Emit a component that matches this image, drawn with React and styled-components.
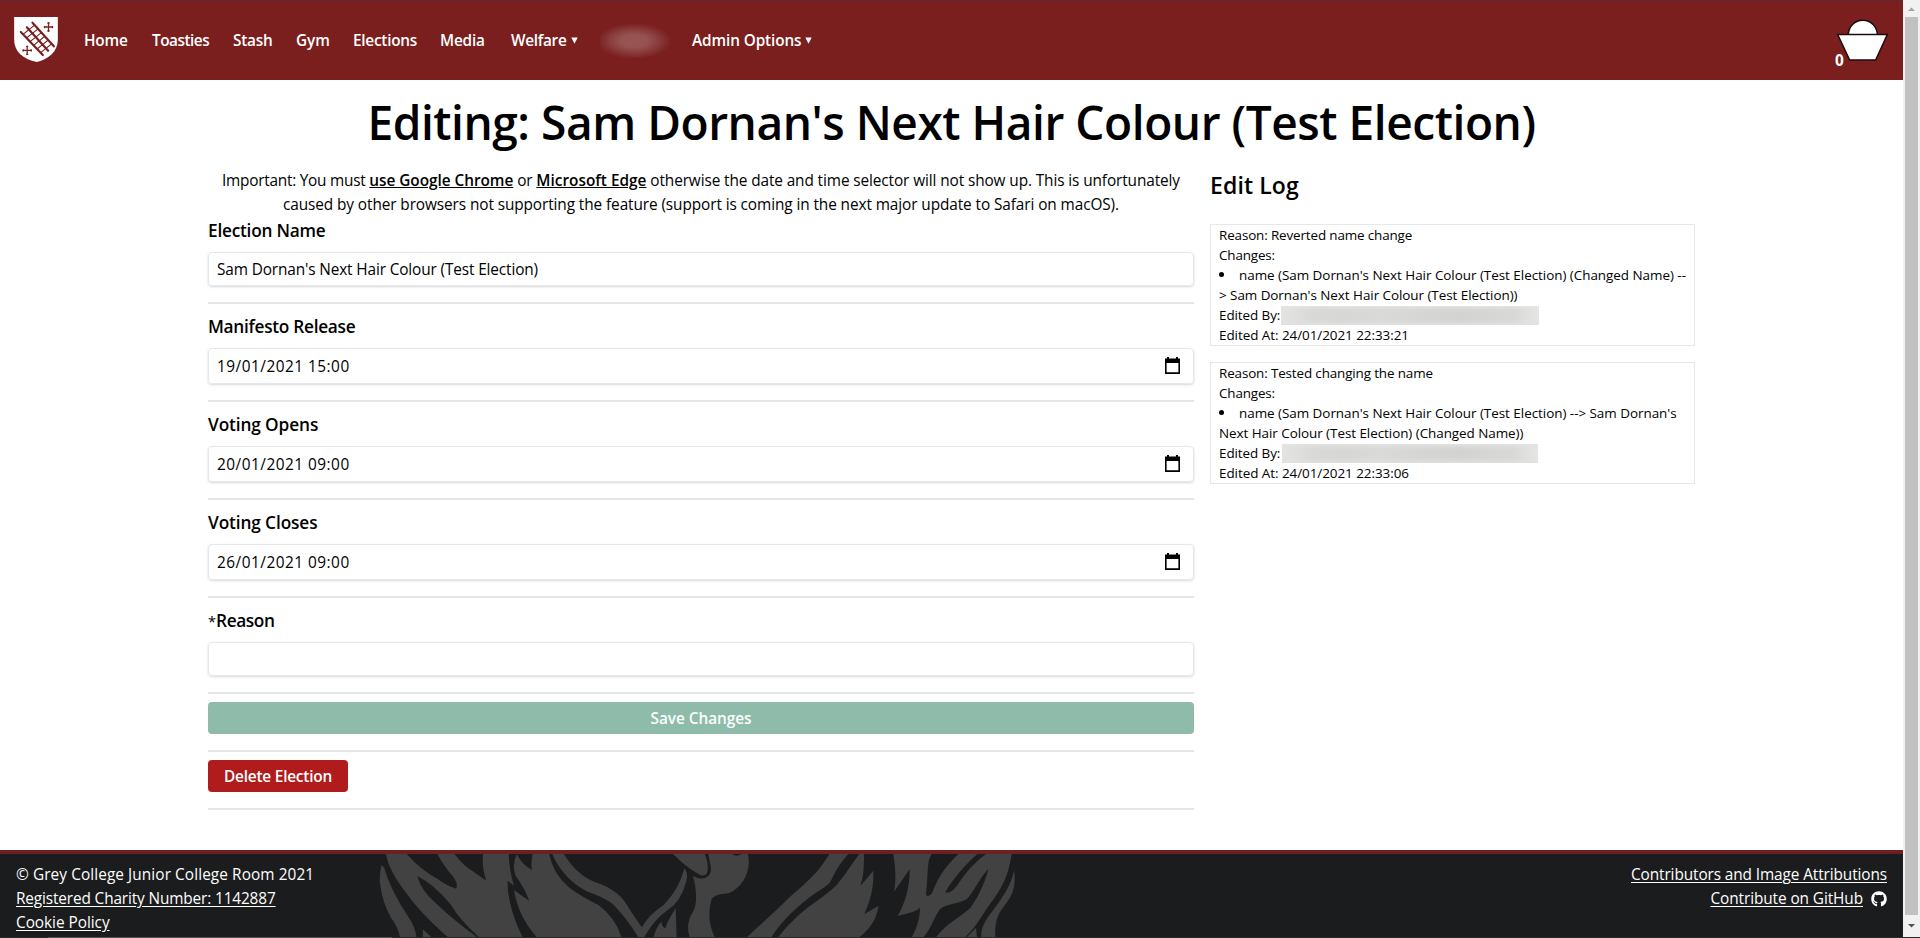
import React from "react";
import styled, { createGlobalStyle } from "styled-components";
import { FaGithub } from "react-icons/fa";

const GlobalStyle = createGlobalStyle`
  *, *::before, *::after { box-sizing: border-box; }
  html, body { margin: 0; height: 938px; overflow: hidden; }
  body {
    background: #fff;
    color: #000;
    font-family: "Open Sans", "Noto Sans", sans-serif;
    font-size: 15.36px;
    line-height: 24px;
  }
  h1, h2, h3, p, ul { margin: 0; padding: 0; font-weight: inherit; }
  a { color: inherit; }
`;

const Window = styled.div`
  display: grid;
  grid-template-columns: 1fr 17px;
  grid-template-rows: 937px 1px;
  height: 938px;
`;

const Page = styled.div`
  display: flex;
  flex-direction: column;
  min-width: 0;
  height: 937px;
`;

const T = styled.span`
  letter-spacing: ${(p) => p.$track || 0}px;
  white-space: pre;
`;

/* Navigation */
const NavBar = styled.nav`
  display: flex;
  align-items: center;
  height: 80px;
  padding: 0 15px 0 14px;
  background: #7a1e1e;
  border-top: 1px solid #5b2a31;
  color: #fff;
  font-weight: 600;
`;

const CrestLink = styled.a`
  display: flex;
  width: 70px;
  padding-bottom: 2px;
`;

const NavItem = styled.div`
  display: flex;
  align-items: center;
  width: ${(p) => p.$width}px;
  gap: 4px;
`;

const Caret = styled.svg`
  width: 7px;
  height: 7px;
`;

const BlurredName = styled.div`
  width: 72px;
  height: 34px;
  margin-left: -1px;
  background: radial-gradient(ellipse 38px 18px at 34px 17px, #985453 0%, #965251 35%, rgba(145, 75, 75, 0.75) 60%, rgba(122, 30, 30, 0) 100%);
`;

const Basket = styled.div`
  position: relative;
  width: 54px;
  height: 50px;
  margin-left: auto;
`;

const BasketCount = styled.span`
  position: absolute;
  left: 1px;
  bottom: -5px;
  line-height: 20px;
  font-weight: 700;
`;

const BasketDrawing = styled.svg`
  display: block;
  width: 52px;
  height: 43px;
  margin: 2px 0 0 2px;
`;

/* Main content */
const Title = styled.h1`
  height: 88px;
  text-align: center;
  font-size: 46.08px;
  line-height: 86px;
  font-weight: 600;
`;

const Columns = styled.main`
  display: flex;
  gap: 16px;
  width: 1487px;
  margin: 0 auto;
  flex: 1;
`;

const FormColumn = styled.div`
  width: 986px;
`;

const Notice = styled.div`
  height: 48px;
  padding-top: 1px;
  text-align: center;
  a { font-weight: 600; }
`;

const Section = styled.section`
  padding: ${(p) => (p.$first ? 0 : 8)}px 0 16px;
  border-bottom: 2px solid #e5e5e6;
`;

const Label = styled.h2`
  height: 28px;
  margin-bottom: 8px;
  font-size: 17.28px;
  line-height: 29px;
  font-weight: 600;
`;

const Asterisk = styled.span`
  font-weight: 400;
  font-size: 14.5px;
`;

const Field = styled.div`
  display: flex;
  align-items: center;
  justify-content: space-between;
  height: ${(p) => (p.$tall ? 36 : 34)}px;
  padding: 1px 13px 0 8px;
  border: 1px solid #e5e7eb;
  border-radius: 4px;
  box-shadow: 0 1px 3px rgba(0, 0, 0, 0.1), 0 1px 2px rgba(0, 0, 0, 0.06);
`;

const CalendarIcon = styled.svg`
  width: 15px;
  height: 17px;
  margin-bottom: 3px;
`;

const Button = styled.button`
  display: block;
  width: ${(p) => p.$width};
  height: 32px;
  padding: 1px 0 0;
  border: 0;
  border-radius: 4px;
  background: ${(p) => p.$bg};
  color: ${(p) => p.$color || "#fff"};
  font: inherit;
  font-weight: 600;
`;

const LogColumn = styled.aside`
  width: 485px;
`;

const LogTitle = styled.h2`
  height: 56px;
  font-size: 23.04px;
  line-height: 34px;
  font-weight: 600;
`;

const LogEntry = styled.article`
  height: 122px;
  margin-bottom: 16px;
  padding: 0 0 0 8px;
  border: 1px solid #e5e7eb;
  font-size: 13.44px;
  line-height: 20px;
`;

const LogLine = styled.p`
  display: flex;
  align-items: center;
  height: 20px;
`;

const Bullet = styled.span`
  flex: none;
  width: 5px;
  height: 5px;
  margin: 0 15px 1px 0;
  border-radius: 50%;
  background: #000;
`;

const BlurredEditor = styled.span`
  width: ${(p) => p.$width}px;
  height: 19px;
  margin-left: ${(p) => p.$gap}px;
  background: linear-gradient(90deg, #e4e4e3 0%, #d9d9d8 12%, #d6d6d5 24%, #dadad9 38%, #d5d5d4 55%, #d3d3d2 70%, #d8d8d7 90%, #e6e6e5 100%);
  box-shadow: inset 0 3px 4px -1px #e4e4e3, inset 0 -3px 4px -1px #e1e1e0;
`;

/* Footer */
const FooterBar = styled.footer`
  position: relative;
  display: flex;
  justify-content: space-between;
  height: 87px;
  padding: 9px 16px 0;
  border-top: 4px solid #6b2121;
  background: #1b1c1d;
  color: #fff;
  overflow: hidden;
`;

const PhoenixBackdrop = styled.svg`
  position: absolute;
  left: 360px;
  top: 0;
  width: 680px;
  height: 83px;
`;

const FooterColumn = styled.div`
  position: relative;
  display: flex;
  flex-direction: column;
  align-items: ${(p) => p.$align || "flex-start"};
`;

const FooterLine = styled.div`
  display: flex;
  align-items: center;
  height: 24px;
  gap: 8px;
  a { text-underline-offset: 2px; }
`;

/* Scrollbar and window edge */
const ScrollTrack = styled.div`
  display: flex;
  flex-direction: column;
  align-items: center;
  background: #f1f1f1;
`;

const ScrollArrow = styled.svg`
  width: 17px;
  height: 17px;
`;

const ScrollThumb = styled.div`
  width: 13px;
  height: 898px;
  background: #c1c1c1;
`;

const WindowEdge = styled.div`
  grid-column: 1 / 3;
  background: linear-gradient(90deg, #2c2829 48px, #555 48px, #555 392px, #2c2829 392px);
`;

function Rungs({ x1, y1, x2, y2 }) {
  const n = 6;
  const rungs = [];
  for (let i = 0; i < n; i++) {
    const t = 0.1 + (i * 0.8) / (n - 1);
    const x = x1 + (x2 - x1) * t;
    const y = y1 + (y2 - y1) * t;
    rungs.push(<path key={i} d={`M${x} ${y}l16 -13`} />);
  }
  return <g>{rungs}</g>;
}

const Crest = () => (
  <svg width="44" height="45" viewBox="42 52 131 135" fill="none" stroke="#7a1e1e" strokeLinecap="round">
    <path d="M42 52H173V120C173 155 145 178 110 187C68 178 42 155 42 120Z" fill="#fff" stroke="none" />
    <g strokeWidth="6.5">
      <path d="M62 97L128 166M80 83L144 153M97 69L161 140" />
    </g>
    <g strokeWidth="3.2">
      <Rungs x1={62} y1={97} x2={128} y2={166} />
      <Rungs x1={80} y1={83} x2={144} y2={153} />
    </g>
    <path d="M133 82H157M145 70V94M69 152H93M81 140V164" strokeWidth="3.8" />
    <path d="M133 80v4M157 80v4M143 70h4M143 94h4M69 150v4M93 150v4M79 140h4M79 164h4" strokeWidth="3.8" />
  </svg>
);

const Down = () => (
  <Caret viewBox="0 0 7 7">
    <path d="M0.3 0.5H6.7L3.5 6.7Z" fill="#fff" />
  </Caret>
);

const Calendar = () => (
  <CalendarIcon viewBox="0 0 15 17">
    <path d="M2 0H4V1.5H11V0H13V1.5H15V17H0V1.5H2ZM1.6 6V15.2H13.4V6Z" fillRule="evenodd" />
  </CalendarIcon>
);

const Phoenix = () => (
  <PhoenixBackdrop viewBox="0 0 680 83" fill="#424242">
    <g transform="scale(0.43367 0.33333) translate(0 -42)">
      <path d="M50 74Q44 100 46 130Q52 190 72 235Q88 260 92 292L130 292Q128 262 112 232Q70 150 56 85Z" />
      <path d="M60 42L108 42Q140 90 180 118Q200 138 222 146Q228 125 205 95Q190 70 178 42L218 42Q240 80 262 95L291 122Q280 80 284 42L343 42Q344 90 355 137L340 122Q340 200 375 292L275 292Q230 240 210 195Q170 132 132 108Q140 150 175 190Q215 240 270 292L203 292Q140 220 110 165Q65 90 60 42Z" />
      <path d="M145 268L165 292H145Z" />
      <path d="M362 42Q370 70 396 90Q394 65 398 42L436 42Q445 100 480 140Q510 170 550 195Q590 235 603 292L408 292Q365 230 355 150Q370 165 390 182Q382 150 358 105Q350 70 362 42Z" />
      <path d="M470 42Q500 105 540 125Q600 150 620 205Q635 235 650 262Q665 225 700 195Q735 150 748 85Q758 100 752 125Q740 185 710 210Q680 235 655 292L642 292Q615 235 585 195Q570 175 525 155Q470 120 443 42Z" />
      <path d="M728 205L730 292L677 292Q682 262 695 245Q696 260 704 265Q710 240 728 205Z" />
      <path d="M722 42L795 42Q806 75 800 100Q792 112 780 102Q750 80 722 42Z" />
      <path d="M803 42L858 42Q868 52 880 42L894 42Q902 80 885 120Q870 150 850 160Q815 162 810 180Q798 240 818 292L760 292Q750 250 768 215Q782 180 768 108Q790 124 804 107Q812 95 808 75Z" />
    </g>
    <g transform="translate(380 -4) scale(0.33333)">
      <path d="M268 12C240 60 210 90 150 140C100 190 60 225 20 262L94 262C120 220 160 180 205 145C245 115 265 110 275 88C290 55 305 35 325 12Z" />
      <path d="M358 12C330 50 315 75 290 105C260 135 210 165 180 192C150 220 130 240 115 262L358 262C385 240 408 215 416 167L373 192C392 150 402 110 400 62L361 108C372 75 372 45 372 12Z" />
      <path d="M460 12L575 12C560 35 566 60 558 132C560 142 570 140 578 125C595 80 620 45 655 12L712 12C680 40 640 85 616 126C625 132 640 122 650 108C680 65 700 40 738 12L815 12C805 75 790 110 750 162C720 205 705 235 675 262L588 262C620 220 650 210 690 175C710 150 735 100 745 58C720 80 700 130 680 148C650 165 620 160 600 178C580 205 575 235 550 262L515 262C530 235 540 205 540 173C520 190 495 190 473 198C495 160 510 110 509 58L462 125C470 85 465 45 460 12Z" />
      <path d="M822 62C830 110 815 140 795 165C765 200 765 230 766 262L724 262C722 235 735 210 760 180C790 140 815 100 822 62Z" />
      <path d="M708 233L711 262H680Z" />
    </g>
  </PhoenixBackdrop>
);

const NAV = [
  { text: "Home", width: 68, track: -0.23 },
  { text: "Toasties", width: 81, track: -0.5 },
  { text: "Stash", width: 63, track: -0.25 },
  { text: "Gym", width: 57, track: -0.1 },
  { text: "Elections", width: 87, track: -0.25 },
  { text: "Media", width: 71, track: -0.2 },
  { text: "Welfare", width: 90, track: -0.3, menu: true },
  { blurred: true, width: 91 },
  { text: "Admin Options", width: 130, track: -0.12, menu: true },
];

const DATES = [
  { label: "Manifesto Release", track: -0.29, value: "19/01/2021 15:00" },
  { label: "Voting Opens", track: -0.12, value: "20/01/2021 09:00" },
  { label: "Voting Closes", track: -0.12, value: "26/01/2021 09:00" },
];

const LOG = [
  {
    reason: "Reason: Reverted name change",
    change: ["name (Sam Dornan's Next Hair Colour (Test Election) (Changed Name) --", "> Sam Dornan's Next Hair Colour (Test Election))"],
    at: "Edited At: 24/01/2021 22:33:21",
    blur: 258,
    gap: 1,
  },
  {
    reason: "Reason: Tested changing the name",
    change: ["name (Sam Dornan's Next Hair Colour (Test Election) --> Sam Dornan's", "Next Hair Colour (Test Election) (Changed Name))"],
    at: "Edited At: 24/01/2021 22:33:06",
    blur: 256,
    gap: 2,
  },
];

export default function App() {
  return (
    <>
      <GlobalStyle />
      <Window>
        <Page>
          <NavBar>
            <CrestLink>
              <Crest />
            </CrestLink>
            {NAV.map((item, i) => (
              <NavItem key={i} $width={item.width}>
                {item.blurred ? <BlurredName /> : <T $track={item.track}>{item.text}</T>}
                {item.menu && <Down />}
              </NavItem>
            ))}
            <Basket>
              <BasketDrawing viewBox="169 54 156 129" fill="#fff" stroke="#1a0c0c" strokeWidth="4.5">
                <path d="M206 104A43.500 43.500 0 0 1 293 104Z" />
                <path d="M174 103.500H323L288 180H210Z" />
              </BasketDrawing>
              <BasketCount>0</BasketCount>
            </Basket>
          </NavBar>

          <Title>
            <T $track={-0.46}>Editing: Sam Dornan's Next Hair Colour (Test Election)</T>
          </Title>

          <Columns>
            <FormColumn>
              <Notice>
                <div>
                  <T $track={-0.24}>Important: You must </T>
                  <a href="#chrome"><T $track={-0.036}>use Google Chrome</T></a>
                  <T $track={-0.1}> or </T>
                  <a href="#edge"><T>Microsoft Edge</T></a>
                  <T $track={-0.1}> otherwise the date and time selector will not show up. This is unfortunately</T>
                </div>
                <div>
                  <T $track={-0.088}>
                    caused by other browsers not supporting the feature (support is coming in the next major update to Safari on macOS).
                  </T>
                </div>
              </Notice>

              <Section $first>
                <Label><T $track={-0.243}>Election Name</T></Label>
                <Field>
                  <T $track={-0.125}>Sam Dornan's Next Hair Colour (Test Election)</T>
                </Field>
              </Section>
              {DATES.map((d) => (
                <Section key={d.label}>
                  <Label><T $track={d.track}>{d.label}</T></Label>
                  <Field $tall>
                    <T $track={0.5}>{d.value}</T>
                    <Calendar />
                  </Field>
                </Section>
              ))}
              <Section>
                <Label><Asterisk>*</Asterisk><T $track={-0.4}>Reason</T></Label>
                <Field />
              </Section>
              <Section>
                <Button $width="100%" $bg="#8fbbaa" $color="#fbfefd"><T $track={-0.033}>Save Changes</T></Button>
              </Section>
              <Section>
                <Button $width="140px" $bg="#b01c1c"><T $track={-0.198}>Delete Election</T></Button>
              </Section>
            </FormColumn>

            <LogColumn>
              <LogTitle><T $track={0.1}>Edit Log</T></LogTitle>
              {LOG.map((e) => (
                <LogEntry key={e.at}>
                  <LogLine><T $track={-0.14}>{e.reason}</T></LogLine>
                  <LogLine><T $track={-0.15}>Changes:</T></LogLine>
                  <LogLine><Bullet /><T $track={-0.03}>{e.change[0]}</T></LogLine>
                  <LogLine><T $track={-0.05}>{e.change[1]}</T></LogLine>
                  <LogLine><T $track={-0.08}>Edited By:</T><BlurredEditor $width={e.blur} $gap={e.gap} /></LogLine>
                  <LogLine><T $track={-0.05}>{e.at}</T></LogLine>
                </LogEntry>
              ))}
            </LogColumn>
          </Columns>

          <FooterBar>
            <Phoenix />
            <FooterColumn>
              <FooterLine><T $track={0.09}>© Grey College Junior College Room 2021</T></FooterLine>
              <FooterLine><a href="#charity"><T $track={-0.13}>Registered Charity Number: 1142887</T></a></FooterLine>
              <FooterLine><a href="#cookies"><T $track={-0.03}>Cookie Policy</T></a></FooterLine>
            </FooterColumn>
            <FooterColumn $align="flex-end">
              <FooterLine><a href="#contributors"><T $track={-0.097}>Contributors and Image Attributions</T></a></FooterLine>
              <FooterLine>
                <a href="#github"><T $track={-0.084}>Contribute on GitHub</T></a>
                <FaGithub size={16} />
              </FooterLine>
            </FooterColumn>
          </FooterBar>
        </Page>
        <ScrollTrack>
          <ScrollArrow viewBox="0 0 17 17"><path d="M5 11L8.500 7.500L12 11Z" fill="#a3a3a3" /></ScrollArrow>
          <ScrollThumb />
          <ScrollArrow viewBox="0 0 17 17"><path d="M5 9L8.500 12.500L12 9Z" fill="#505050" /></ScrollArrow>
        </ScrollTrack>
        <WindowEdge />
      </Window>
    </>
  );
}
